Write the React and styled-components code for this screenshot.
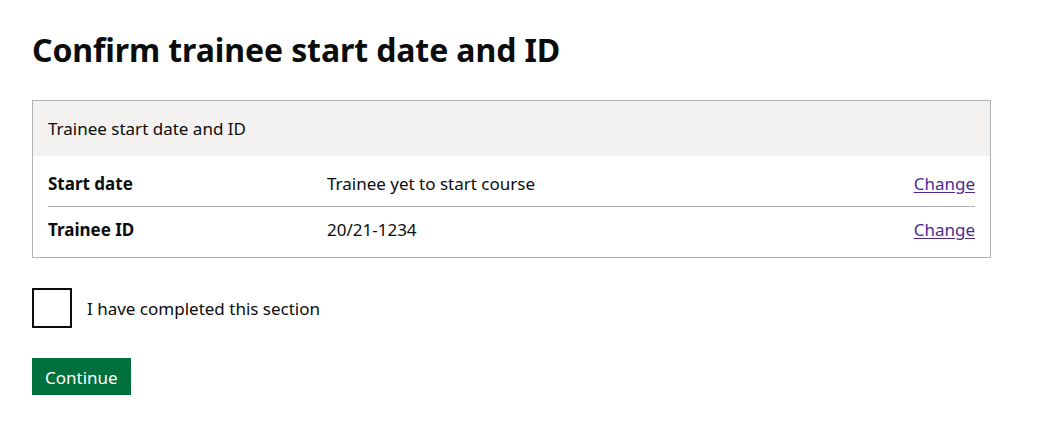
import React from "react";
import styled, { createGlobalStyle } from "styled-components";

const GlobalStyle = createGlobalStyle`
  body {
    margin: 0;
    background: #ffffff;
    color: #0b0c0c;
    font-family: "Noto Sans", Arial, sans-serif;
  }
`;

const rows = [
  { key: "Start date", value: "Trainee yet to start course" },
  { key: "Trainee ID", value: "20/21-1234" },
];

function App() {
  return (
    <>
      <GlobalStyle />
      <Page>
        <Heading>Confirm trainee start date and ID</Heading>
        <Card>
          <CardHeader>Trainee start date and ID</CardHeader>
          <List>
            {rows.map((row) => (
              <Row key={row.key}>
                <Key>{row.key}</Key>
                <Value>{row.value}</Value>
                <Action>
                  <ChangeLink href="#">Change</ChangeLink>
                </Action>
              </Row>
            ))}
          </List>
        </Card>
        <CheckboxItem>
          <Box type="checkbox" id="completed" />
          <CheckLabel htmlFor="completed">I have completed this section</CheckLabel>
        </CheckboxItem>
        <Button>Continue</Button>
      </Page>
    </>
  );
}

export default App;

const Page = styled.main`
  padding: 30px 46px 0 32px;
`;

const Heading = styled.h1`
  margin: 0 0 30px;
  font-size: 32px;
  line-height: 40px;
  font-weight: 700;
  letter-spacing: -0.1px;
`;

const Card = styled.div`
  width: 959px;
  box-sizing: border-box;
  border: 1px solid #b1b4b6;
  margin-bottom: 30px;
`;

const CardHeader = styled.div`
  background: #f3f2f1;
  padding: 15px 15px;
  font-size: 17px;
  line-height: 25px;
`;

const List = styled.dl`
  margin: 0;
  padding: 0 15px 5px;
`;

const Row = styled.div`
  display: grid;
  grid-template-columns: 279px 1fr auto;
  font-size: 17px;
  line-height: 25px;
  padding: 10px 0;
  border-bottom: 1px solid #b1b4b6;

  &:first-child {
    padding-top: 15px;
  }

  &:last-child {
    border-bottom: none;
  }
`;

const Key = styled.dt`
  font-weight: 700;
`;

const Value = styled.dd`
  margin: 0;
`;

const Action = styled.dd`
  margin: 0;
  text-align: right;
`;

const ChangeLink = styled.a`
  color: #4c2c92;
  text-decoration: underline;
  text-underline-offset: 2px;
`;

const CheckboxItem = styled.div`
  display: flex;
  align-items: center;
  gap: 15px;
  margin-bottom: 30px;
`;

const Box = styled.input`
  appearance: none;
  margin: 0;
  width: 40px;
  height: 40px;
  box-sizing: border-box;
  border: 2px solid #0b0c0c;
  background: #fff;
`;

const CheckLabel = styled.label`
  font-size: 17px;
  line-height: 25px;
`;

const Button = styled.button`
  font-family: inherit;
  font-size: 17px;
  line-height: 19px;
  padding: 10px 13px 8px;
  border: none;
  border-radius: 0;
  color: #fff;
  background: #00703c;
  box-shadow: 0 2px 0 #002d18;
  cursor: pointer;
`;
